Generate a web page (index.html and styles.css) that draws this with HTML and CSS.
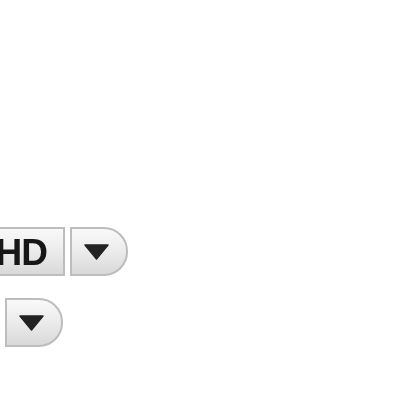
FILE: index.html
```html
<!DOCTYPE html>
<html lang="en">
<head>
<meta charset="UTF-8">
<title>Quality menu</title>
<link rel="stylesheet" href="styles.css">
</head>
<body>
  <div class="controls">
    <!-- quality selector -->
    <div class="row row-quality">
      <button class="btn btn-label">HD</button>
      <button class="btn btn-drop">
        <svg class="arrow" width="25" height="16" viewBox="0 0 25 16"><polygon points="1,1 24,1 12.5,15" /></svg>
      </button>
    </div>

    <!-- second menu -->
    <div class="row row-menu">
      <button class="btn btn-drop">
        <svg class="arrow" width="25" height="16" viewBox="0 0 25 16"><polygon points="1,1 24,1 12.5,15" /></svg>
      </button>
    </div>
  </div>
</body>
</html>
```

FILE: styles.css
```css
body {
  margin: 0;
  background-color: #FFFFFF;
  font-family: "Liberation Sans", Arial, sans-serif;
  overflow: hidden;
}

.controls {
  padding-top: 227px;
  display: flex;
  flex-direction: column;
  gap: 22px;
}

.row {
  display: flex;
  gap: 5px;
  filter: blur(0.5px);
}

.row-quality {
  margin-left: -30px;
}

.row-menu {
  margin-left: 5px;
}

.btn {
  height: 49px;
  padding: 0;
  border: 2px solid #bdbdbd;
  background: linear-gradient(#f9f9f9, #ebebeb 50%, #d9d9d9);
  color: #161616;
  display: flex;
  align-items: center;
  justify-content: center;
  box-sizing: border-box;
}

.btn-label {
  width: 95px;
  justify-content: flex-end;
  padding-right: 16px;
  padding-top: 2px;
  font-size: 37px;
  font-weight: bold;
  font-family: "Liberation Sans", Arial, sans-serif;
  letter-spacing: -1px;
}

.btn-drop {
  width: 58px;
  border-radius: 0 24px 24px 0;
  padding-right: 5px;
}

.arrow {
  fill: #222222;
  stroke: #222222;
  stroke-width: 1.5;
  stroke-linejoin: round;
}
```
